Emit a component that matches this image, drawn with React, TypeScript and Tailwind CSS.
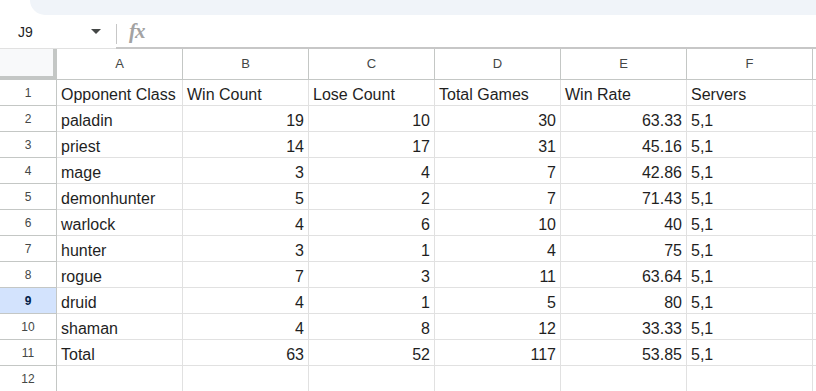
const cols = ["A", "B", "C", "D", "E", "F"];

const rows: (string | number)[][] = [
  ["Opponent Class", "Win Count", "Lose Count", "Total Games", "Win Rate", "Servers"],
  ["paladin", 19, 10, 30, 63.33, "5,1"],
  ["priest", 14, 17, 31, 45.16, "5,1"],
  ["mage", 3, 4, 7, 42.86, "5,1"],
  ["demonhunter", 5, 2, 7, 71.43, "5,1"],
  ["warlock", 4, 6, 10, 40, "5,1"],
  ["hunter", 3, 1, 4, 75, "5,1"],
  ["rogue", 7, 3, 11, 63.64, "5,1"],
  ["druid", 4, 1, 5, 80, "5,1"],
  ["shaman", 4, 8, 12, 33.33, "5,1"],
  ["Total", 63, 52, 117, 53.85, "5,1"],
  [],
];

const selectedRow = 9;

export default function App() {
  return (
    <div
      className="w-[816px] h-[391px] overflow-hidden bg-white text-[#1f1f1f]"
      style={{ fontFamily: "'Liberation Sans', Arial, sans-serif" }}
    >
      {/* toolbar bottom edge */}
      <div className="h-[15px] pl-[30px]">
        <div className="h-full bg-[#f0f4f9] rounded-bl-[15px]" />
      </div>

      {/* ── Formula bar ── */}
      <div className="flex h-[34px] items-center">
        <div className="w-[116px] h-full flex items-center pl-[18px] pr-[15px] border-b border-[#e1e1e1]">
          <span className="text-[14px] flex-1 pt-px">J9</span>
          <span className="w-0 h-0 border-l-[5px] border-r-[5px] border-t-[5px] border-l-transparent border-r-transparent border-t-[#444746]" />
        </div>
        <div className="flex-1 h-full flex items-center relative border-b-2 border-[#c7c7c7]">
          <span className="absolute left-0 top-[9px] h-[20px] w-px bg-[#c7c7c7]" />
          <span
            className="ml-[13px] text-[21px] leading-none italic font-bold text-[#a3a3a3] tracking-[-1px]"
            style={{ fontFamily: "'Liberation Serif', 'Times New Roman', serif" }}
          >
            fx
          </span>
        </div>
      </div>

      {/* ── Grid ── */}
      <div className="grid grid-cols-[57px_repeat(6,126px)_1fr]">
        {/* header row */}
        <div className="h-[31px] bg-[#f8f9fa] border-r-4 border-b-4 border-[#c4c7c5]" />
        {cols.map((c) => (
          <div
            key={c}
            className="h-[31px] flex items-center justify-center text-[13px] text-[#444746] border-r border-b border-[#c4c7c5]"
          >
            {c}
          </div>
        ))}
        <div className="h-[31px] border-b border-[#c4c7c5]" />

        {rows.map((r, i) => {
          const n = i + 1;
          const sel = n === selectedRow;
          return [
            <div
              key={`h${n}`}
              className={`h-[26px] flex items-center justify-center text-[12px] pt-px border-r border-b border-[#c4c7c5] ${
                sel ? "bg-[#d3e3fd] text-[#041e49] font-bold" : "text-[#444746]"
              }`}
            >
              {n}
            </div>,
            ...cols.map((c, j) => {
              const v = r[j];
              const num = typeof v === "number";
              return (
                <div
                  key={`${c}${n}`}
                  className={`h-[26px] flex items-end px-[4px] text-[16px] leading-[20px] whitespace-nowrap overflow-visible border-r border-b border-[#e1e1e1] ${
                    num ? "justify-end" : "justify-start"
                  }`}
                >
                  {v ?? ""}
                </div>
              );
            }),
            <div key={`g${n}`} className="h-[26px] border-b border-[#e1e1e1]" />,
          ];
        })}
      </div>
    </div>
  );
}
